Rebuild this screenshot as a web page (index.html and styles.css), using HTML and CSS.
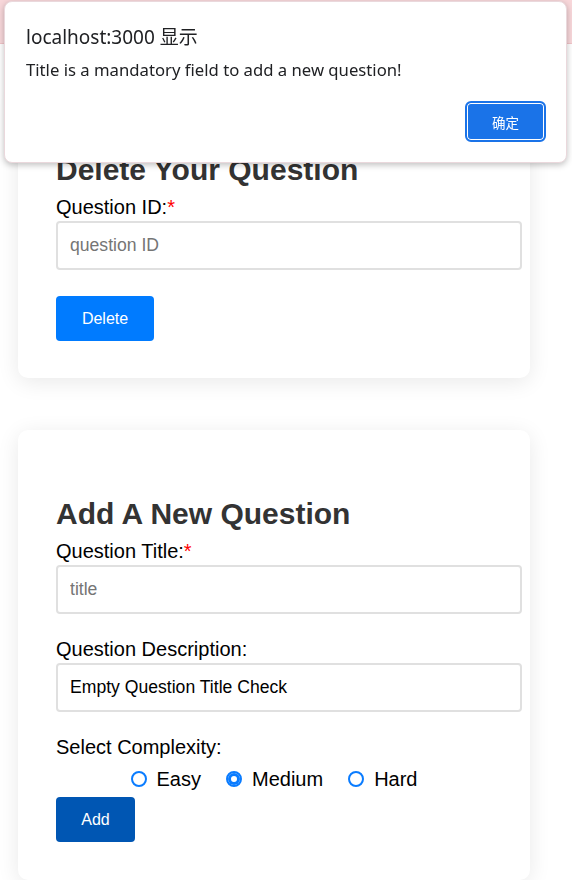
FILE: index.html
```html
<!DOCTYPE html>
<html lang="en">
<head>
<meta charset="utf-8">
<title>Questions</title>
<link rel="stylesheet" href="styles.css">
</head>
<body>
<div class="alert"></div>
<main class="page">
  <section class="card">
    <h2 class="card-title">Delete Your Question</h2>
    <div class="field field-last">
      <label class="label" for="qid">Question ID:<span class="req">*</span></label>
      <input class="input" id="qid" type="text" placeholder="question ID">
    </div>
    <button class="btn btn-primary" type="button">Delete</button>
  </section>

  <section class="card card-add">
    <h2 class="card-title">Add A New Question</h2>
    <div class="field">
      <label class="label" for="qtitle">Question Title:<span class="req">*</span></label>
      <input class="input" id="qtitle" type="text" placeholder="title">
    </div>
    <div class="field">
      <label class="label" for="qdesc">Question Description:</label>
      <input class="input" id="qdesc" type="text" value="Empty Question Title Check">
    </div>
    <div class="label">Select Complexity:</div>
    <div class="radios">
      <label class="radio"><input type="radio" name="cx"> Easy</label>
      <label class="radio"><input type="radio" name="cx" checked> Medium</label>
      <label class="radio"><input type="radio" name="cx"> Hard</label>
    </div>
    <button class="btn btn-dark" type="button">Add</button>
  </section>
</main>

<div class="dialog" role="alertdialog">
  <div class="dialog-title">localhost:3000 显示</div>
  <div class="dialog-msg">Title is a mandatory field to add a new question!</div>
  <div class="dialog-actions">
    <button class="dialog-btn" type="button">确定</button>
  </div>
</div>
</body>
</html>
```

FILE: styles.css
```css
* { box-sizing: border-box; }

body {
  margin: 0;
  background: #fff;
  font-family: "Liberation Sans", Arial, sans-serif;
  color: #000;
}

.alert {
  height: 44px;
  background: #f8d7da;
  border-bottom: 1px solid #f0c4c8;
}

.page {
  display: flex;
  flex-direction: column;
  gap: 52px;
  width: 512px;
  margin: 42px 0 0 18px;
}

.card {
  background: #fff;
  border-radius: 10px;
  box-shadow: 0 4px 22px rgba(0, 0, 0, 0.09);
  padding: 38px 8px 37px 38px;
  display: flex;
  flex-direction: column;
  align-items: flex-start;
}

.card-add { padding-bottom: 38px; }

.card-title {
  margin: 29px 0 9px;
  font-size: 30px;
  line-height: 34px;
  font-weight: bold;
  color: #333;
}

.field {
  display: flex;
  flex-direction: column;
  gap: 2px;
  width: 100%;
  margin-bottom: 24px;
}

.field-last { margin-bottom: 26px; }

.label {
  font-size: 20px;
  line-height: 23px;
  color: #000;
}

.req { color: #f00; }

.input {
  width: 466px;
  height: 49px;
  border: 2px solid #e0e0e0;
  border-radius: 4px;
  padding: 0 12px;
  font-family: "Liberation Sans", Arial, sans-serif;
  font-size: 17.6px;
  color: #000;
  background: #fff;
  outline: none;
}

.input::placeholder { color: #757575; }

.radios {
  align-self: stretch;
  margin-right: 30px;
  display: flex;
  justify-content: center;
  align-items: center;
  gap: 25px;
  margin-top: 9px;
  height: 22px;
}

.radio {
  display: flex;
  align-items: center;
  gap: 10px;
  font-size: 20px;
  line-height: 22px;
}

.radio input {
  appearance: none;
  -webkit-appearance: none;
  width: 16px;
  height: 16px;
  margin: 0;
  border: 2px solid #0a7cff;
  border-radius: 50%;
  background: #fff;
}

.radio input:checked {
  box-shadow: inset 0 0 0 3px #0a7cff;
}

.btn {
  height: 45px;
  padding: 0 25px;
  border: none;
  border-radius: 4px;
  color: #fff;
  font-family: "Liberation Sans", Arial, sans-serif;
  font-size: 16px;
}

.btn-primary {
  background: #007bff;
  width: 98px;
}

.btn-dark {
  background: #0056b3;
  width: 79px;
  margin-top: 7px;
}

/* native-like alert dialog overlay */
.dialog {
  position: fixed;
  left: 4px;
  top: 1px;
  width: 563px;
  height: 162px;
  background: #fff;
  border: 1px solid #ead8dc;
  border-radius: 8px;
  box-shadow: 0 2px 6px rgba(0, 0, 0, 0.25);
  padding: 22px 20px 0 21px;
  font-family: "Noto Sans", "Noto Sans CJK SC", sans-serif;
}

.dialog-title {
  font-size: 19px;
  line-height: 27px;
  color: #202124;
}

.dialog-msg {
  margin-top: 8px;
  font-size: 16.7px;
  line-height: 22px;
  color: #202124;
}

.dialog-actions {
  display: flex;
  justify-content: flex-end;
  margin-top: 20px;
}

.dialog-btn {
  width: 81px;
  height: 41px;
  background: #1a73e8;
  border: 2px solid #1a73e8;
  box-shadow: inset 0 0 0 1px #fff;
  border-radius: 6px;
  color: #fff;
  font-family: "Noto Sans CJK SC", sans-serif;
  font-size: 13.5px;
}
```
